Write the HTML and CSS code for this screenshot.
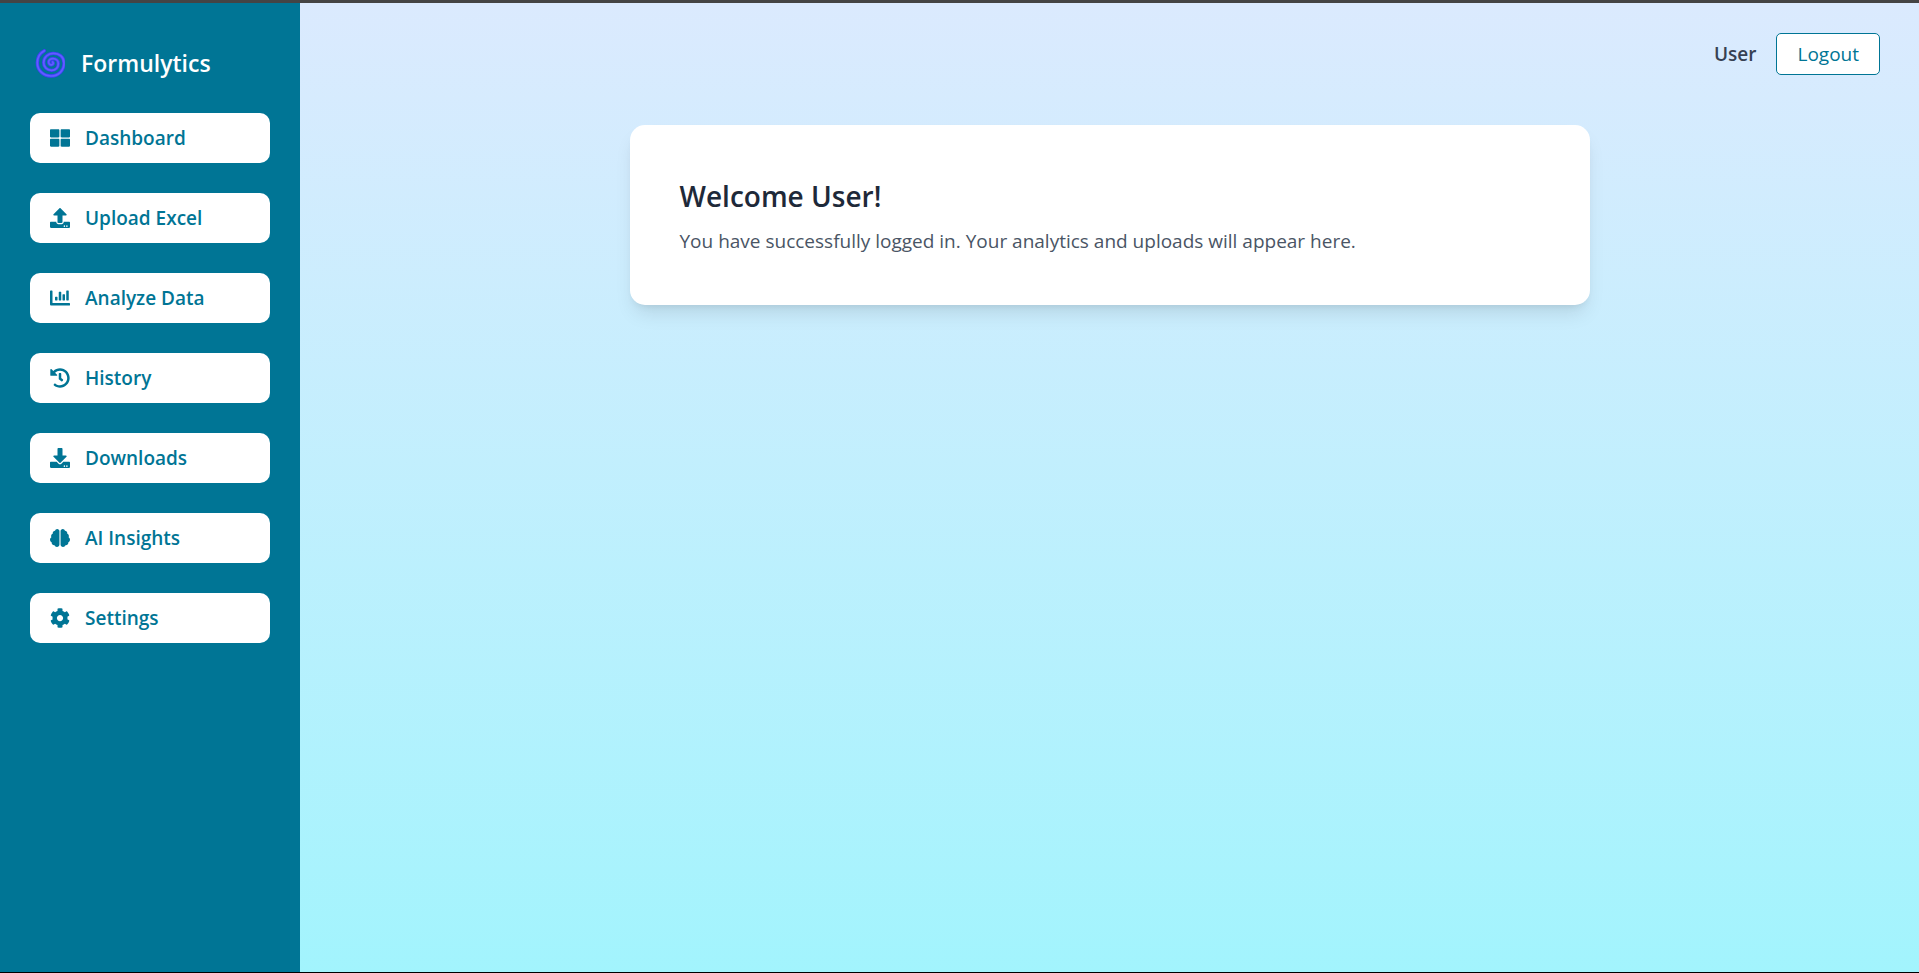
FILE: index.html
```html
<!DOCTYPE html>
<html lang="en">
<head>
<meta charset="utf-8">
<meta name="viewport" content="width=device-width, initial-scale=1">
<title>Formulytics</title>
<link rel="stylesheet" href="styles.css">
</head>
<body>
<div class="app">
  <aside class="sidebar">
    <div class="brand">
      <svg class="brand-logo" viewBox="45 57 90 90" aria-hidden="true">
        <path class="spiral" d="M73 65C60 72 52 86 52 101C52 124 70 141 93 141C116 141 132 124 132 103C132 84 118 73 100 73C84 73 71 85 71 101C71 114 81 124 95 124C107 124 115 115 115 104C115 95 108 89 99 89C91 89 86 94 86 99C86 105 91 109 96 107C100 106 101 102 98 99"/>
        <path class="spiral-light" d="M73 65C60 72 52 86 52 101C52 124 70 141 93 141C116 141 132 124 132 103C132 84 118 73 100 73C84 73 71 85 71 101C71 114 81 124 95 124C107 124 115 115 115 104C115 95 108 89 99 89C91 89 86 94 86 99C86 105 91 109 96 107C100 106 101 102 98 99"/>
      </svg>
      <span class="brand-name">Formulytics</span>
    </div>
    <nav class="nav">
      <a class="nav-item" href="#dashboard">
        <svg class="icon" viewBox="0 0 512 512" aria-hidden="true"><path d="M296 32h192c13.255 0 24 10.745 24 24v160c0 13.255-10.745 24-24 24H296c-13.255 0-24-10.745-24-24V56c0-13.255 10.745-24 24-24zm-80 0H24C10.745 32 0 42.745 0 56v160c0 13.255 10.745 24 24 24h192c13.255 0 24-10.745 24-24V56c0-13.255-10.745-24-24-24zM0 296v160c0 13.255 10.745 24 24 24h192c13.255 0 24-10.745 24-24V296c0-13.255-10.745-24-24-24H24c-13.255 0-24 10.745-24 24zm296 184h192c13.255 0 24-10.745 24-24V296c0-13.255-10.745-24-24-24H296c-13.255 0-24 10.745-24 24v160c0 13.255 10.745 24 24 24z"/></svg>
        <span>Dashboard</span>
      </a>
      <a class="nav-item" href="#upload">
        <svg class="icon" viewBox="0 0 512 512" aria-hidden="true"><path d="M296 384h-80c-13.3 0-24-10.7-24-24V192h-87.7c-17.8 0-26.7-21.5-14.1-34.1L242.3 5.7c7.5-7.5 19.8-7.5 27.3 0l152.2 152.2c12.6 12.6 3.7 34.1-14.1 34.1H320v168c0 13.3-10.7 24-24 24zm216-8v112c0 13.3-10.7 24-24 24H24c-13.3 0-24-10.7-24-24V376c0-13.3 10.7-24 24-24h136v8c0 30.9 25.1 56 56 56h80c30.9 0 56-25.1 56-56v-8h136c13.3 0 24 10.7 24 24zm-124 88c0-11-9-20-20-20s-20 9-20 20 9 20 20 20 20-9 20-20zm64 0c0-11-9-20-20-20s-20 9-20 20 9 20 20 20 20-9 20-20z"/></svg>
        <span>Upload Excel</span>
      </a>
      <a class="nav-item" href="#analyze">
        <svg class="icon" viewBox="0 0 512 512" aria-hidden="true"><path d="M332.8 320h38.4c6.4 0 12.8-6.4 12.8-12.8V172.8c0-6.4-6.4-12.8-12.8-12.8h-38.4c-6.4 0-12.8 6.4-12.8 12.8v134.4c0 6.4 6.4 12.8 12.8 12.8zm96 0h38.4c6.4 0 12.8-6.4 12.8-12.8V76.8c0-6.4-6.4-12.8-12.8-12.8h-38.4c-6.4 0-12.8 6.4-12.8 12.8v230.4c0 6.4 6.4 12.8 12.8 12.8zm-288 0h38.4c6.4 0 12.8-6.4 12.8-12.8v-70.4c0-6.4-6.4-12.8-12.8-12.8h-38.4c-6.4 0-12.8 6.4-12.8 12.8v70.4c0 6.4 6.4 12.8 12.8 12.8zm96 0h38.4c6.4 0 12.8-6.4 12.8-12.8V108.8c0-6.4-6.4-12.8-12.8-12.8h-38.4c-6.4 0-12.8 6.4-12.8 12.8v198.4c0 6.4 6.4 12.8 12.8 12.8zM496 384H64V80c0-8.84-7.16-16-16-16H16C7.16 64 0 71.16 0 80v336c0 17.67 14.33 32 32 32h464c8.84 0 16-7.16 16-16v-32c0-8.84-7.16-16-16-16z"/></svg>
        <span>Analyze Data</span>
      </a>
      <a class="nav-item" href="#history">
        <svg class="icon" viewBox="0 0 512 512" aria-hidden="true"><path d="M504 255.531c.253 136.64-111.18 248.372-247.82 248.468-59.015.042-113.223-20.53-155.822-54.911-11.077-8.94-11.905-25.541-1.839-35.607l11.267-11.267c8.609-8.609 22.353-9.551 31.891-1.984C173.062 425.135 212.781 440 256 440c101.705 0 184-82.311 184-184 0-101.705-82.311-184-184-184-48.814 0-93.149 18.969-126.068 49.932l50.754 50.754c10.08 10.08 2.941 27.314-11.313 27.314H24c-8.837 0-16-7.163-16-16V38.627c0-14.254 17.234-21.393 27.314-11.314l49.372 49.372C129.209 34.136 189.552 8 256 8c136.81 0 247.747 110.78 248 247.531zm-180.912 78.784l9.823-12.63c8.138-10.463 6.253-25.542-4.21-33.679L288 256.349V152c0-13.255-10.745-24-24-24h-16c-13.255 0-24 10.745-24 24v135.651l65.409 50.874c10.463 8.137 25.541 6.253 33.679-4.21z"/></svg>
        <span>History</span>
      </a>
      <a class="nav-item" href="#downloads">
        <svg class="icon" viewBox="0 0 512 512" aria-hidden="true"><path d="M216 0h80c13.3 0 24 10.7 24 24v168h87.7c17.8 0 26.7 21.5 14.1 34.1L269.7 378.3c-7.5 7.5-19.8 7.5-27.3 0L90.1 226.1c-12.6-12.6-3.7-34.1 14.1-34.1H192V24c0-13.3 10.7-24 24-24zm296 376v112c0 13.3-10.7 24-24 24H24c-13.3 0-24-10.7-24-24V376c0-13.3 10.7-24 24-24h146.7l49 49c20.1 20.1 52.5 20.1 72.6 0l49-49H488c13.3 0 24 10.7 24 24zm-124 88c0-11-9-20-20-20s-20 9-20 20 9 20 20 20 20-9 20-20zm64 0c0-11-9-20-20-20s-20 9-20 20 9 20 20 20 20-9 20-20z"/></svg>
        <span>Downloads</span>
      </a>
      <a class="nav-item" href="#insights">
        <svg class="icon" viewBox="0 0 576 512" aria-hidden="true"><path d="M208 0c-29.9 0-54.7 20.5-61.8 48.2-.8 0-1.4-.2-2.2-.2-35.3 0-64 28.7-64 64 0 4.8.6 9.5 1.7 14C52.5 138 32 166.6 32 200c0 12.6 3.2 24.3 8.3 34.9C16.3 248.7 0 274.3 0 304c0 33.3 20.4 61.9 49.4 73.9-.9 4.6-1.4 9.3-1.4 14.1 0 39.8 32.2 72 72 72 4.1 0 8.1-.5 12-1.2 9.6 28.5 36.2 49.2 68 49.2 39.8 0 72-32.2 72-72V64c0-35.3-28.7-64-64-64zm368 304c0-29.7-16.3-55.3-40.3-69.1 5.2-10.6 8.3-22.3 8.3-34.9 0-33.4-20.5-62-49.7-74 1-4.5 1.7-9.2 1.7-14 0-35.3-28.7-64-64-64-.8 0-1.5.2-2.2.2C422.7 20.5 397.9 0 368 0c-35.3 0-64 28.6-64 64v376c0 39.8 32.2 72 72 72 31.8 0 58.4-20.7 68-49.2 3.9.7 7.9 1.2 12 1.2 39.8 0 72-32.2 72-72 0-4.8-.5-9.5-1.4-14.1 29-12 49.4-40.6 49.4-73.9z"/></svg>
        <span>AI Insights</span>
      </a>
      <a class="nav-item" href="#settings">
        <svg class="icon" viewBox="0 0 512 512" aria-hidden="true"><path d="M487.4 315.7l-42.6-24.6c4.3-23.2 4.3-47 0-70.2l42.6-24.6c4.9-2.8 7.1-8.6 5.5-14-11.1-35.6-30-67.8-54.7-94.6-3.8-4.1-10-5.1-14.8-2.3L380.8 110c-17.9-15.4-38.5-27.3-60.8-35.1V25.8c0-5.6-3.9-10.5-9.4-11.7-36.7-8.2-74.3-7.8-109.2 0-5.5 1.2-9.4 6.1-9.4 11.7V75c-22.2 7.9-42.8 19.8-60.8 35.1L88.7 85.5c-4.9-2.8-11-1.9-14.8 2.3-24.7 26.7-43.6 58.9-54.7 94.6-1.7 5.4.6 11.2 5.5 14L67.3 221c-4.3 23.2-4.3 47 0 70.2l-42.6 24.6c-4.9 2.8-7.1 8.6-5.5 14 11.1 35.6 30 67.8 54.7 94.6 3.8 4.1 10 5.1 14.8 2.3l42.6-24.6c17.9 15.4 38.5 27.3 60.8 35.1v49.2c0 5.6 3.9 10.5 9.4 11.7 36.7 8.2 74.3 7.8 109.2 0 5.5-1.2 9.4-6.1 9.4-11.7v-49.2c22.2-7.9 42.8-19.8 60.8-35.1l42.6 24.6c4.9 2.8 11 1.9 14.8-2.3 24.7-26.7 43.6-58.9 54.7-94.6 1.5-5.5-.7-11.3-5.6-14.1zM256 336c-44.1 0-80-35.9-80-80s35.9-80 80-80 80 35.9 80 80-35.9 80-80 80z"/></svg>
        <span>Settings</span>
      </a>
    </nav>
  </aside>
  <div class="page">
    <header class="topbar">
      <span class="user-name">User</span>
      <button class="logout" type="button">Logout</button>
    </header>
    <main class="content">
      <section class="card">
        <h1 class="card-title">Welcome User!</h1>
        <p class="card-text">You have successfully logged in. Your analytics and uploads will appear here.</p>
      </section>
    </main>
  </div>
</div>
</body>
</html>
```

FILE: styles.css
```css
* {
  box-sizing: border-box;
}

body {
  margin: 0;
  font-family: "Segoe UI", "Open Sans", "Noto Sans", sans-serif;
  font-size: 19px;
  line-height: 30px;
  color: #1e2939;
}

.app {
  display: flex;
  min-height: 100vh;
  border-top: 3px solid #444444;
  border-bottom: 1px solid #000000;
}

.sidebar {
  flex: none;
  width: 300px;
  padding: 40px 30px 30px;
  background: #007595;
}

.brand {
  display: flex;
  align-items: center;
  gap: 16px;
  height: 40px;
  margin-bottom: 30px;
  padding-left: 5px;
  color: #ffffff;
}

.brand-logo {
  width: 30px;
  height: 30px;
}

.spiral,
.spiral-light {
  fill: none;
  stroke: #423ffb;
  stroke-width: 10;
  stroke-linecap: round;
}

.spiral-light {
  stroke: #625fff;
  stroke-width: 5;
}

.brand-name {
  font-size: 23px;
  font-weight: 600;
}

.nav {
  display: grid;
  gap: 30px;
}

.nav-item {
  display: flex;
  align-items: center;
  gap: 15px;
  padding: 10px 20px;
  border-radius: 10px;
  background: #ffffff;
  color: #007595;
  font-weight: 600;
  text-decoration: none;
}

.icon {
  width: 20px;
  height: 20px;
  fill: currentColor;
}

.page {
  flex: 1;
  min-width: 0;
  background: linear-gradient(to bottom in oklab, #dbeafe, #a2f4fd);
}

.topbar {
  display: flex;
  align-items: center;
  justify-content: flex-end;
  gap: 20px;
  padding: 30px 39px 0;
}

.user-name {
  color: #364153;
  font-weight: 600;
}

.logout {
  padding: 5px 20px;
  border: 1px solid #007595;
  border-radius: 5px;
  background: #ffffff;
  color: #007595;
  font: inherit;
}

.content {
  padding: 50px 40px;
}

.card {
  max-width: 960px;
  margin: 0 auto;
  padding: 51px 50px 49px;
  border-radius: 15px;
  background: #ffffff;
  box-shadow: 0 12px 19px -4px rgba(0, 0, 0, 0.1), 0 5px 8px -5px rgba(0, 0, 0, 0.1);
}

.card-title {
  margin: 0 0 10px;
  font-size: 28px;
  font-weight: 600;
  line-height: 40px;
}

.card-text {
  margin: 0;
  color: #4a5565;
}
```
